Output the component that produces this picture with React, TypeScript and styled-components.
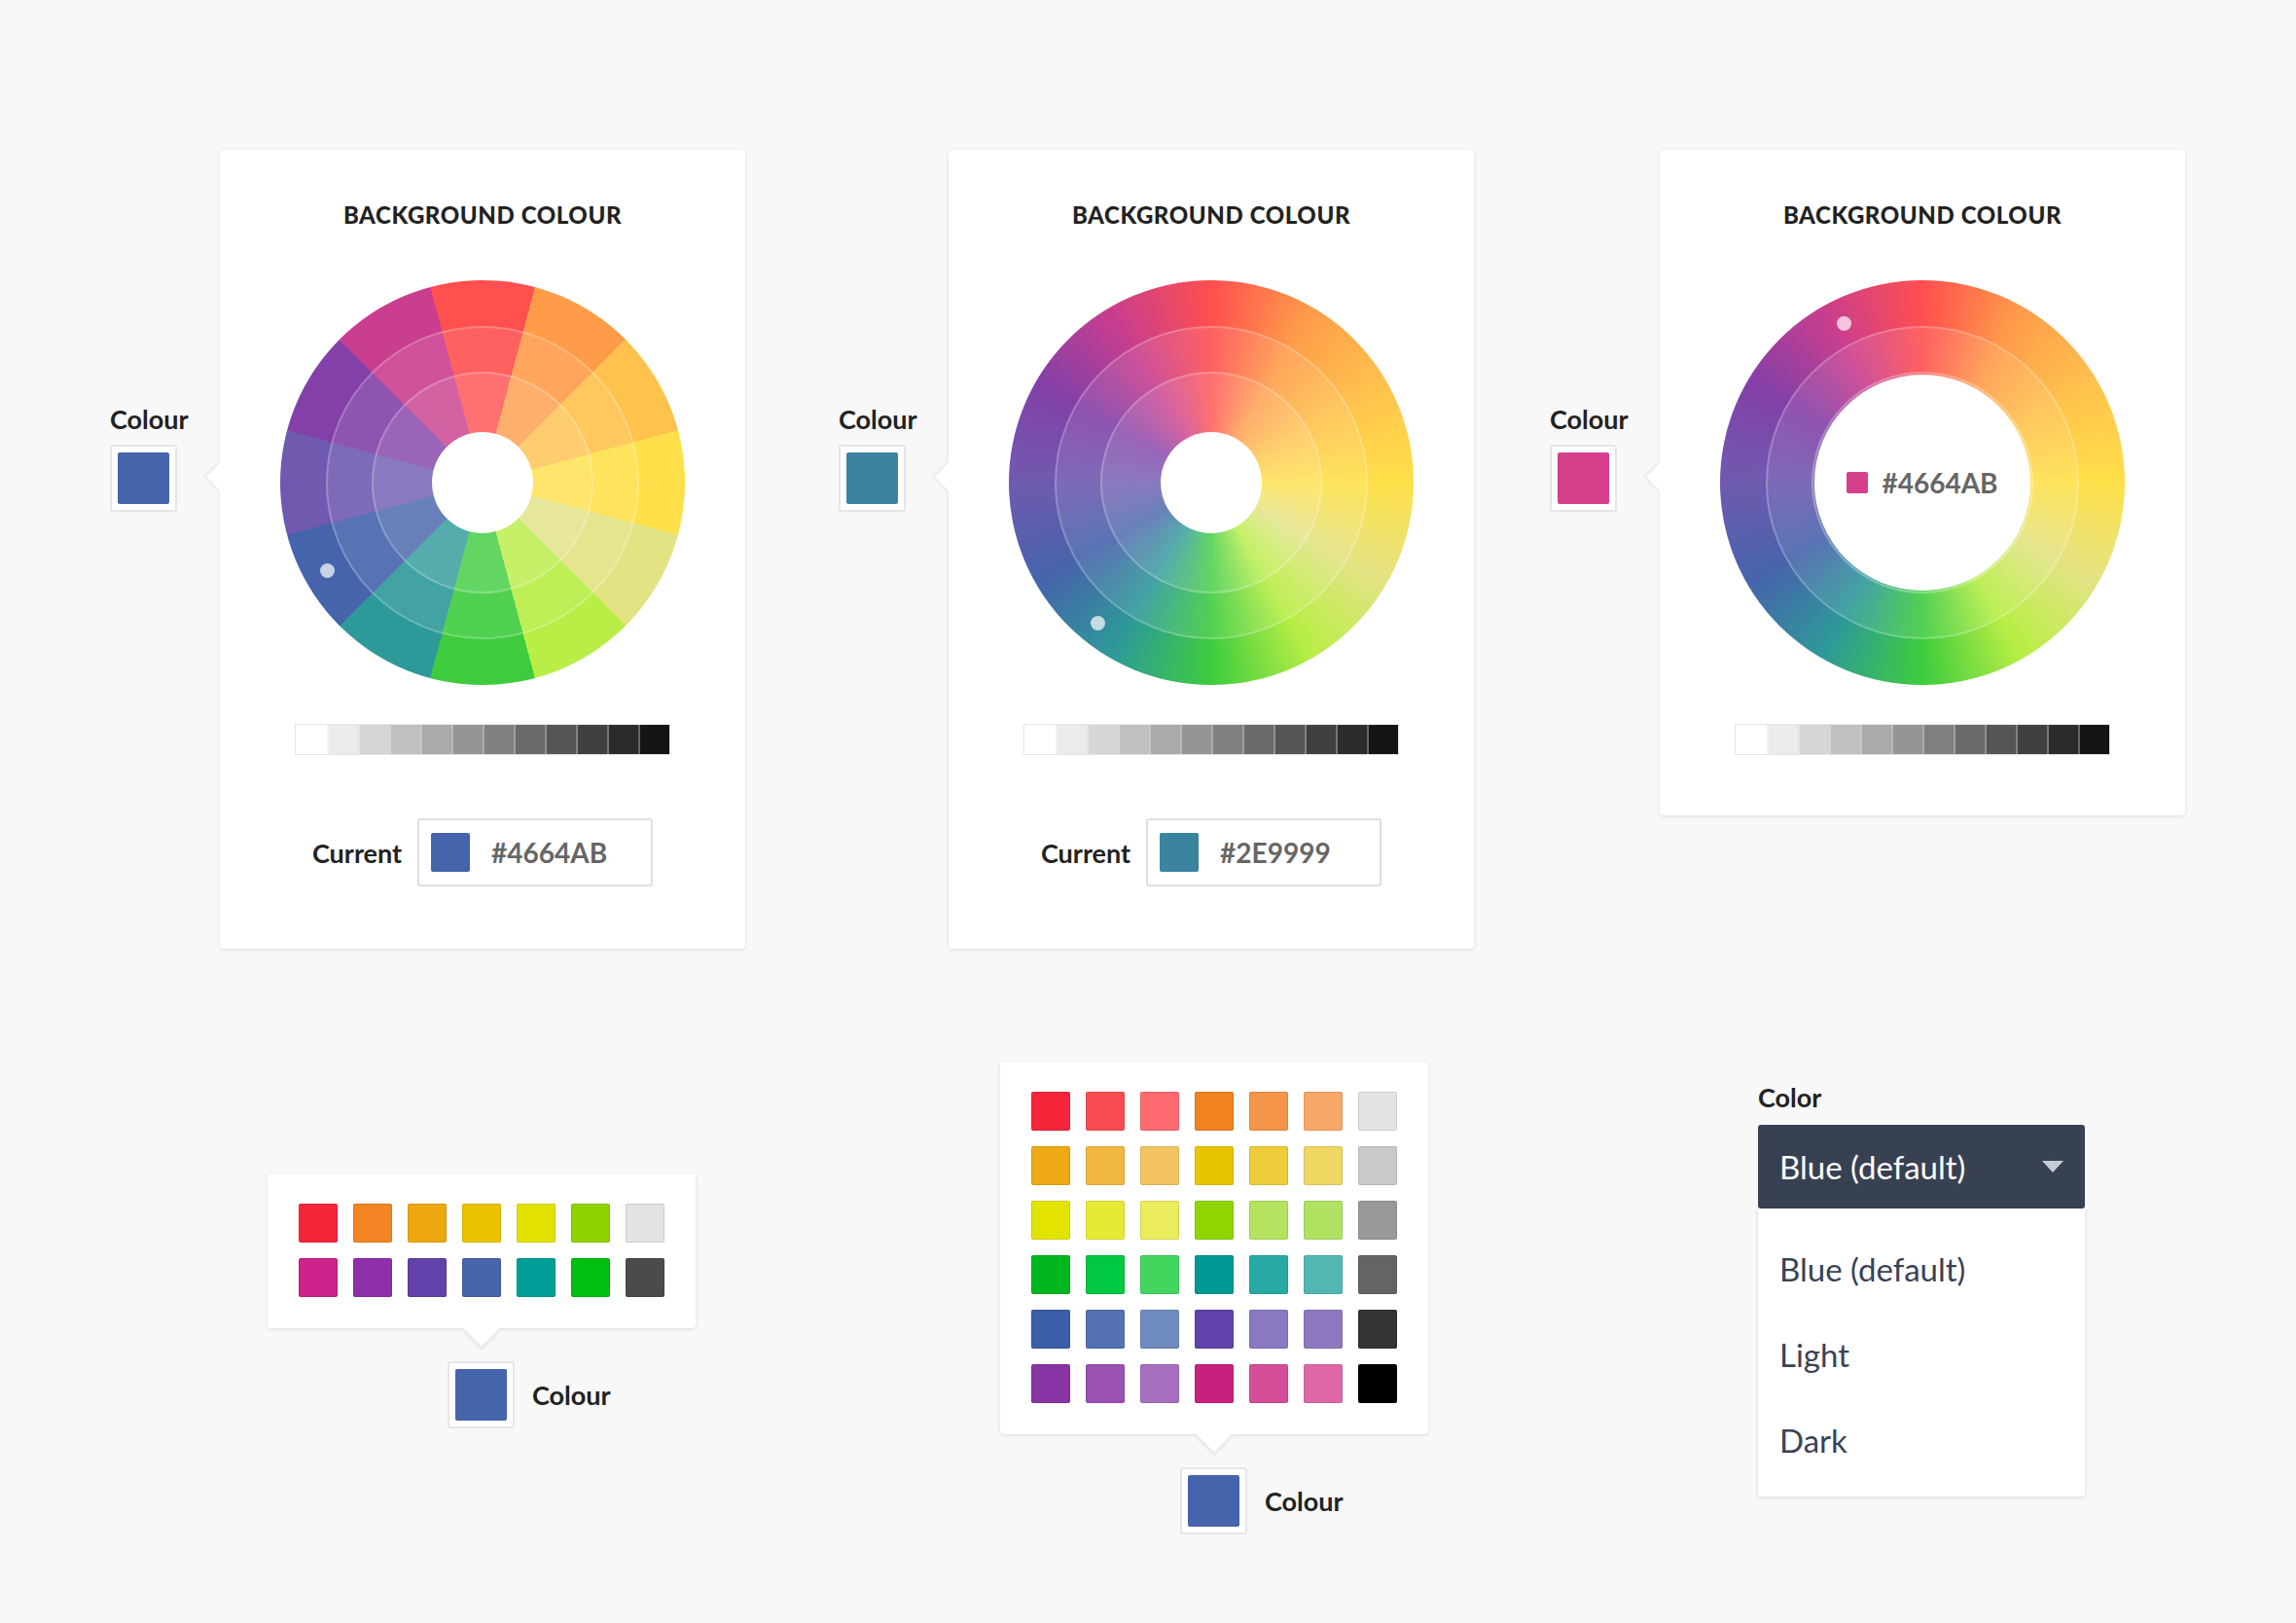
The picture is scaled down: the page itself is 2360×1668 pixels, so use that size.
import React from 'react'
import styled, { createGlobalStyle } from 'styled-components'

const GlobalStyle = createGlobalStyle`
  body {
    margin: 0;
    background: #f8f8f8;
    font-family: Lato, "Open Sans", sans-serif;
    color: #222;
  }
`

const hues = [
  '#FF4F4F', '#FF9C4A', '#FFC24D', '#FFE04A', '#E3E384', '#B8EE45',
  '#3ECC3E', '#2E9999', '#4664AB', '#6F5AB0', '#8340A8', '#C93E8E',
]

const hardGradient = `conic-gradient(from -15deg, ${hues
  .map((c, i) => `${c} ${i * 30}deg ${(i + 1) * 30}deg`)
  .join(', ')})`
const smoothGradient = `conic-gradient(${[...hues, hues[0]]
  .map((c, i) => `${c} ${i * 30}deg`)
  .join(', ')})`

const grays = ['#ffffff', '#ebebeb', '#d6d6d6', '#c0c0c0', '#aaaaaa', '#959595', '#808080', '#6a6a6a', '#555555', '#404040', '#2b2b2b', '#141414']

const smallPalette = [
  '#F7253A', '#F28423', '#EFA710', '#E9C300', '#E2E200', '#8FD400', '#E3E3E3',
  '#CC2289', '#8E30AB', '#6241AA', '#4664AB', '#009E96', '#00BF10', '#4B4B4B',
]

const bigPalette = [
  '#F7253A', '#FA4D51', '#FC6A70', '#F0821F', '#F49549', '#F8A769', '#E3E3E3',
  '#EEA914', '#F1B542', '#F3C362', '#E9C501', '#EDCD3A', '#F0D761', '#CACBC8',
  '#E2E301', '#E6EA35', '#EAEC5C', '#91D500', '#B3E35F', '#B0E261', '#999999',
  '#00B81D', '#00C841', '#43D65E', '#009894', '#27AAA3', '#52B7B2', '#646464',
  '#3A5EA8', '#5472B3', '#6E8ABF', '#6141AA', '#8B78C3', '#8E79C1', '#333333',
  '#8734A5', '#9952B1', '#A66FBE', '#C8207E', '#D54D98', '#DE68A7', '#000000',
]

const Page = styled.div`
  width: 2360px;
  height: 1668px;
  box-sizing: border-box;
  padding: 154px 0 0 113px;
`

const TopRow = styled.div`
  display: grid;
  grid-template-columns: 749px 731px auto;
  align-items: start;
`

const Column = styled.div`
  display: flex;
  align-items: flex-start;
`

const SwatchGroup = styled.div`
  width: 113px;
  padding-top: 260px;
  display: flex;
  flex-direction: column;
  gap: 10px;
`

const Label = styled.div`
  font-size: 27px;
  font-weight: 700;
  color: #222;
`

const SwatchBox = styled.div`
  width: 69px;
  height: 69px;
  box-sizing: border-box;
  padding: 6px;
  background: #fff;
  border: 2px solid #e6e6e6;
  border-radius: 3px;
`

const Fill = styled.div<{ $c: string }>`
  width: 100%;
  height: 100%;
  background: ${(p) => p.$c};
  border-radius: 2px;
`

const Card = styled.div<{ $pb: number }>`
  position: relative;
  width: 540px;
  box-sizing: border-box;
  padding: 52px 0 ${(p) => p.$pb}px;
  background: #fff;
  border-radius: 4px;
  box-shadow: 0 1px 4px rgba(0, 0, 0, 0.12);
  display: flex;
  flex-direction: column;
  align-items: center;
  &::before {
    content: '';
    position: absolute;
    left: -10px;
    top: 326px;
    width: 20px;
    height: 20px;
    background: #fff;
    transform: rotate(45deg);
    box-shadow: -2px 2px 3px rgba(0, 0, 0, 0.06);
  }
`

const Title = styled.div`
  font-size: 24px;
  font-weight: 900;
  letter-spacing: 0.6px;
  color: #222;
`

const WheelDisk = styled.div<{ $bg: string }>`
  position: relative;
  margin-top: 53px;
  width: 416px;
  height: 416px;
  border-radius: 50%;
  background: ${(p) => p.$bg};
  display: flex;
  align-items: center;
  justify-content: center;
`

const Ring = styled.div<{ $r: number }>`
  position: absolute;
  left: calc(50% - ${(p) => p.$r}px);
  top: calc(50% - ${(p) => p.$r}px);
  width: ${(p) => p.$r * 2}px;
  height: ${(p) => p.$r * 2}px;
  box-sizing: border-box;
  border-radius: 50%;
  background: rgba(255, 255, 255, 0.1);
  border: 2px solid rgba(255, 255, 255, 0.22);
`

const Hole = styled.div<{ $r: number }>`
  position: relative;
  width: ${(p) => p.$r * 2}px;
  height: ${(p) => p.$r * 2}px;
  border-radius: 50%;
  background: #fff;
  display: flex;
  align-items: center;
  justify-content: center;
  gap: 14px;
`

const Dot = styled.div`
  position: absolute;
  width: 15px;
  height: 15px;
  margin: -7px 0 0 -7px;
  border-radius: 50%;
  background: rgba(255, 255, 255, 0.7);
`

const HoleSwatch = styled.div`
  width: 22px;
  height: 22px;
  border-radius: 2px;
  background: #D63F8C;
`

const HoleText = styled.div`
  font-size: 28px;
  font-weight: 700;
  color: #666;
`

const GrayBar = styled.div`
  margin-top: 40px;
  display: flex;
  border: 1px solid #e4e4e4;
`

const GrayCell = styled.div<{ $c: string }>`
  width: 32px;
  height: 30px;
  box-sizing: border-box;
  background: ${(p) => p.$c};
  & + & {
    border-left: 2px solid rgba(255, 255, 255, 0.35);
  }
`

const CurrentRow = styled.div`
  margin-top: 65px;
  display: flex;
  align-items: center;
  gap: 16px;
`

const CurrentLabel = styled.div`
  font-size: 27px;
  font-weight: 700;
`

const HexInput = styled.div`
  width: 242px;
  height: 70px;
  box-sizing: border-box;
  border: 2px solid #dedede;
  border-radius: 3px;
  display: flex;
  align-items: center;
  padding-left: 12px;
  gap: 22px;
`

const InputSwatch = styled.div<{ $c: string }>`
  width: 40px;
  height: 40px;
  border-radius: 2px;
  background: ${(p) => p.$c};
`

const HexText = styled.div`
  font-size: 28px;
  font-weight: 700;
  color: #666;
`

const BottomRow = styled.div`
  display: grid;
  grid-template-columns: 753px 779px auto;
  align-items: start;
  margin-left: 162px;
`

const PaletteWrap = styled.div<{ $mt: number }>`
  margin-top: ${(p) => p.$mt}px;
  display: flex;
  flex-direction: column;
`

const PaletteCard = styled.div`
  position: relative;
  align-self: flex-start;
  padding: 31px 32px 32px;
  background: #fff;
  border-radius: 4px;
  box-shadow: 0 1px 4px rgba(0, 0, 0, 0.12);
  display: grid;
  grid-template-columns: repeat(7, 40px);
  gap: 16px;
  &::after {
    content: '';
    position: absolute;
    left: 50%;
    bottom: -13px;
    width: 26px;
    height: 26px;
    margin-left: -13px;
    background: #fff;
    transform: rotate(45deg);
    box-shadow: 3px 3px 3px rgba(0, 0, 0, 0.06);
  }
`

const PaletteSwatch = styled.div<{ $c: string }>`
  width: 40px;
  height: 40px;
  border-radius: 2px;
  background: ${(p) => p.$c};
  box-shadow: inset 0 0 0 1px rgba(0, 0, 0, 0.1);
`

const TriggerRow = styled.div`
  margin-top: 34px;
  padding-left: 185px;
  display: flex;
  align-items: center;
  gap: 18px;
`

const Dropdown = styled.div`
  margin-top: 136px;
  width: 336px;
`

const DropLabel = styled.div`
  font-size: 27px;
  font-weight: 700;
  margin-bottom: 12px;
`

const DropButton = styled.div`
  height: 86px;
  box-sizing: border-box;
  padding: 0 22px;
  background: #384152;
  border-radius: 3px;
  color: #fff;
  font-size: 33px;
  display: flex;
  align-items: center;
  justify-content: space-between;
`

const Caret = styled.div`
  width: 0;
  height: 0;
  border-left: 11px solid transparent;
  border-right: 11px solid transparent;
  border-top: 12px solid #c7cbd3;
`

const Menu = styled.div`
  background: #fff;
  box-shadow: 0 1px 4px rgba(0, 0, 0, 0.14);
  border-radius: 0 0 3px 3px;
  padding: 18px 0 14px;
`

const MenuItem = styled.div`
  height: 88px;
  display: flex;
  align-items: center;
  padding-left: 22px;
  font-size: 33px;
  color: #3a4255;
`

interface WheelProps {
  bg: string
  hole: number
  dot: [number, number]
  children?: React.ReactNode
}

const Wheel: React.FC<WheelProps> = ({ bg, hole, dot, children }) => (
  <WheelDisk $bg={bg}>
    <Ring $r={161} />
    <Ring $r={114} />
    <Hole $r={hole}>{children}</Hole>
    <Dot style={{ left: 208 + dot[0], top: 208 + dot[1] }} />
  </WheelDisk>
)

const Grays = () => (
  <GrayBar>
    {grays.map((c) => (
      <GrayCell key={c} $c={c} />
    ))}
  </GrayBar>
)

const ColourSwatch: React.FC<{ color: string }> = ({ color }) => (
  <SwatchGroup>
    <Label>Colour</Label>
    <SwatchBox>
      <Fill $c={color} />
    </SwatchBox>
  </SwatchGroup>
)

const App: React.FC = () => (
  <Page>
    <GlobalStyle />
    <TopRow>
      <Column>
        <ColourSwatch color="#4664AB" />
        <Card $pb={64}>
          <Title>BACKGROUND COLOUR</Title>
          <Wheel bg={hardGradient} hole={52} dot={[-160, 90]} />
          <Grays />
          <CurrentRow>
            <CurrentLabel>Current</CurrentLabel>
            <HexInput>
              <InputSwatch $c="#4664AB" />
              <HexText>#4664AB</HexText>
            </HexInput>
          </CurrentRow>
        </Card>
      </Column>
      <Column>
        <ColourSwatch color="#3A84A0" />
        <Card $pb={64}>
          <Title>BACKGROUND COLOUR</Title>
          <Wheel bg={smoothGradient} hole={52} dot={[-117, 144]} />
          <Grays />
          <CurrentRow>
            <CurrentLabel>Current</CurrentLabel>
            <HexInput>
              <InputSwatch $c="#3A84A0" />
              <HexText>#2E9999</HexText>
            </HexInput>
          </CurrentRow>
        </Card>
      </Column>
      <Column>
        <ColourSwatch color="#D63F8C" />
        <Card $pb={62}>
          <Title>BACKGROUND COLOUR</Title>
          <Wheel bg={smoothGradient} hole={111} dot={[-81, -164]}>
            <HoleSwatch />
            <HoleText>#4664AB</HoleText>
          </Wheel>
          <Grays />
        </Card>
      </Column>
    </TopRow>
    <BottomRow>
      <PaletteWrap $mt={231}>
        <PaletteCard>
          {smallPalette.map((c, i) => (
            <PaletteSwatch key={i} $c={c} />
          ))}
        </PaletteCard>
        <TriggerRow>
          <SwatchBox>
            <Fill $c="#4664AB" />
          </SwatchBox>
          <Label>Colour</Label>
        </TriggerRow>
      </PaletteWrap>
      <PaletteWrap $mt={116}>
        <PaletteCard>
          {bigPalette.map((c, i) => (
            <PaletteSwatch key={i} $c={c} />
          ))}
        </PaletteCard>
        <TriggerRow>
          <SwatchBox>
            <Fill $c="#4664AB" />
          </SwatchBox>
          <Label>Colour</Label>
        </TriggerRow>
      </PaletteWrap>
      <Dropdown>
        <DropLabel>Color</DropLabel>
        <DropButton>
          <span>Blue (default)</span>
          <Caret />
        </DropButton>
        <Menu>
          <MenuItem>Blue (default)</MenuItem>
          <MenuItem>Light</MenuItem>
          <MenuItem>Dark</MenuItem>
        </Menu>
      </Dropdown>
    </BottomRow>
  </Page>
)

export default App
